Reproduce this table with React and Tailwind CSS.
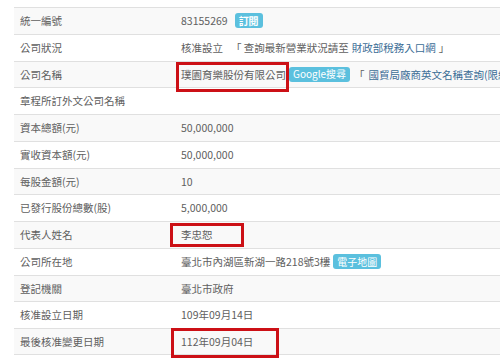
import React from "react";

const Badge = ({ children, className = "" }) => (
  <span
    className={
      "inline-flex items-center rounded-[3px] bg-[#5bc0de] text-white text-[10px] leading-none px-[4px] h-[15px] " +
      className
    }
  >
    {children}
  </span>
);

const rows = [
  {
    label: "統一編號",
    value: (
      <>
        <span>83155269</span>
        <Badge className="ml-[7px] font-bold">訂閱</Badge>
      </>
    ),
  },
  {
    label: "公司狀況",
    value: (
      <>
        <span>核准設立</span>
        <span className="ml-[8px]">「 查詢最新營業狀況請至 </span>
        <span className="text-[#3b6d96] ml-[3px]">財政部稅務入口網</span>
        <span className="ml-[3px]"> 」</span>
      </>
    ),
  },
  {
    label: "公司名稱",
    value: (
      <>
        <span>璞園育樂股份有限公司</span>
        <Badge className="ml-[3px] px-[3px]">Google搜尋</Badge>
        <span className="ml-[4px]">「</span>
        <span className="text-[#3b6d96] ml-[4px]">國貿局廠商英文名稱查詢(限經營出進口或買賣業務者)</span>
        <span> 」</span>
      </>
    ),
  },
  { label: "章程所訂外文公司名稱", value: null },
  { label: "資本總額(元)", value: "50,000,000" },
  { label: "實收資本額(元)", value: "50,000,000" },
  { label: "每股金額(元)", value: "10" },
  { label: "已發行股份總數(股)", value: "5,000,000" },
  { label: "代表人姓名", value: "李忠恕" },
  {
    label: "公司所在地",
    value: (
      <>
        <span>臺北市內湖區新湖一路218號3樓</span>
        <Badge className="ml-[3px] h-[13px]">電子地圖</Badge>
      </>
    ),
  },
  { label: "登記機關", value: "臺北市政府" },
  { label: "核准設立日期", value: "109年09月14日" },
  { label: "最後核准變更日期", value: "112年09月04日" },
];

export default function App() {
  return (
    <div
      className="relative w-[500px] h-[360px] overflow-hidden bg-white text-[#606060] text-[10.5px]"
      style={{ fontFamily: '"Noto Sans CJK TC", "Noto Sans", sans-serif' }}
    >
      <div className="pt-[7px] pl-[14px] flex flex-col">
        {rows.map((r, i) => (
          <div
            key={i}
            className={
              "flex items-center h-[26.77px] border-t border-[#e0e0e0] whitespace-nowrap " +
              (i % 2 === 0 ? "bg-[#f9f9f9]" : "bg-white") +
              (i === rows.length - 1 ? " border-b" : "")
            }
          >
            <div className="w-[159px] shrink-0 pl-[6px]">{r.label}</div>
            <div className="pl-[8px] flex items-center">{r.value}</div>
          </div>
        ))}
      </div>

      <div className="absolute left-[176px] top-[62px] w-[113px] h-[30px] border-[3px] border-[#cc1016]" />
      <div className="absolute left-[170px] top-[223px] w-[74px] h-[24px] border-[3px] border-[#cc1016]" />
      <div className="absolute left-[171px] top-[328px] w-[108px] h-[30px] border-[3px] border-[#cc1016]" />
    </div>
  );
}
